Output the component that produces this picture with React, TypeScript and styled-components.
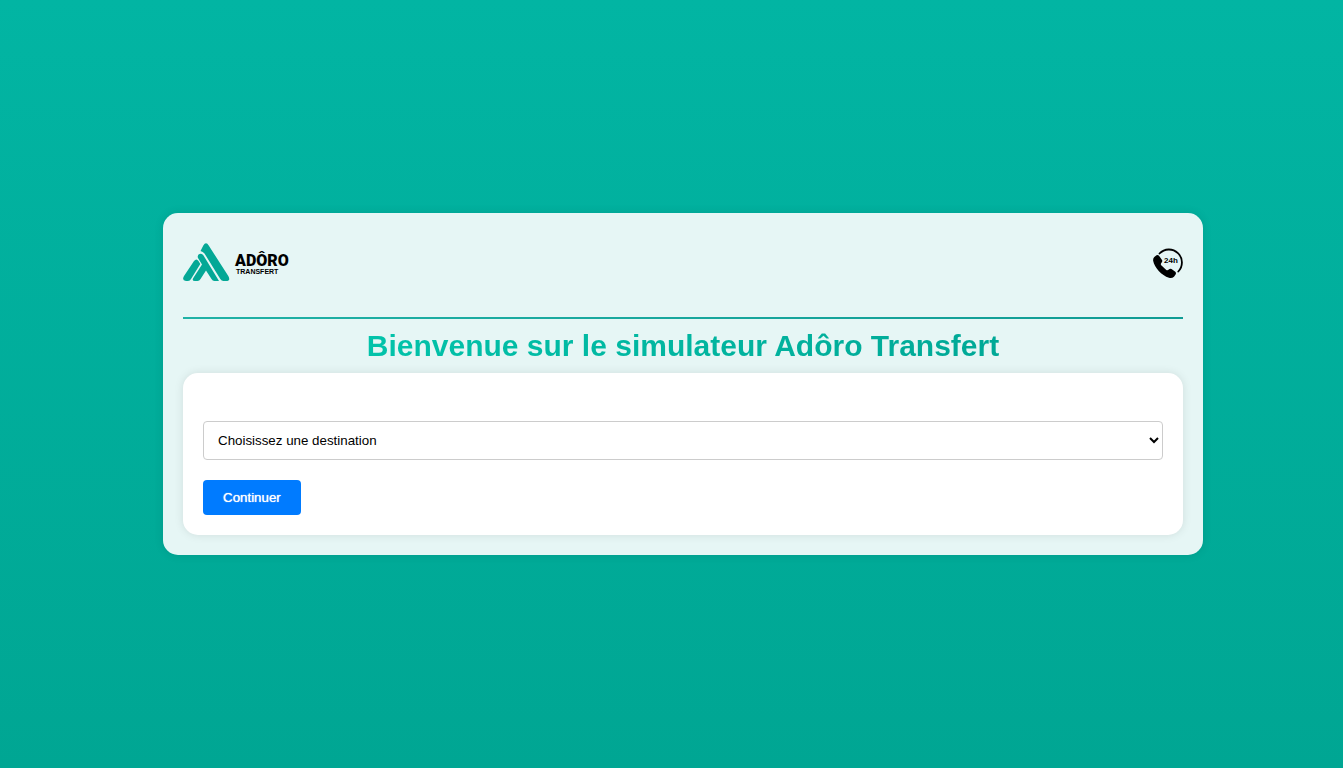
import React from "react";
import styled, { createGlobalStyle } from "styled-components";

const GlobalStyle = createGlobalStyle`
  *, *::before, *::after { box-sizing: border-box; }
  body {
    margin: 0;
    font-family: "Liberation Sans", Arial, sans-serif;
    background: #00a896;
  }
`;

const Page = styled.div`
  min-height: 100vh;
  display: flex;
  align-items: center;
  justify-content: center;
  padding: 20px 0 20px 23px;
  background: linear-gradient(to bottom, #02b5a3, #00a693);
`;

const Card = styled.main`
  width: 100%;
  max-width: 1040px;
  padding: 20px;
  border-radius: 15px;
  background: #e6f6f5;
  box-shadow: 0 0 10px rgba(0, 0, 0, 0.1);
`;

const Header = styled.header`
  display: flex;
  align-items: flex-start;
  justify-content: space-between;
  padding: 10px 0 36px;
  border-bottom: 2px solid;
  border-image: linear-gradient(to right, #20b2a6, #109c94) 1;
`;

const LogoLink = styled.a`
  display: flex;
  svg { display: block; }
`;

const PhoneLink = styled.a`
  display: flex;
  padding-top: 5px;
  svg { display: block; }
`;

const Title = styled.h1`
  margin: 10px 0;
  font-size: 30px;
  line-height: 34px;
  text-align: center;
  color: transparent;
  background: linear-gradient(to right, #02c3aa 18%, #00a896 82%);
  background-clip: text;
  -webkit-background-clip: text;
`;

const Form = styled.form`
  display: flex;
  flex-direction: column;
  align-items: flex-start;
  gap: 20px;
  padding: 48px 20px 20px;
  border-radius: 15px;
  background: #fff;
  box-shadow: 0 0 10px rgba(0, 0, 0, 0.1);
`;

const Select = styled.select`
  width: 100%;
  height: 39px;
  padding: 10px;
  border: 1px solid #ccc;
  border-radius: 4px;
  background: #fff;
  color: #000;
  font-family: inherit;
`;

const Button = styled.button`
  padding: 10px 20px;
  border: none;
  border-radius: 4px;
  background: #007bff;
  color: #fff;
  font-family: inherit;
  line-height: 15px;
  text-shadow: 0 0 1px #fff;
  cursor: pointer;
`;

const Logo = () => (
  <svg width="110" height="38" viewBox="0 0 110 38" aria-hidden="true">
    <g fill="#04a896">
      <path d="M3 38 Q-1.500 37.500 1 33 L11 18 Q13.500 15 15.500 18 L17.300 21 L8 36 Q7 38 5 38 Z" />
      <path d="M12 38 Q8.500 38 10.300 35 L19 21.500 L15 15 Q14 12 16.500 11 Q19 10 20.500 12.500 L36 38 L31.500 38 Q29.500 38 28.500 36 L23 27.500 L17.500 36 Q16.500 38 14.500 38 Z" />
      <path d="M17.500 8 L20.300 2.500 Q23 -2 25.700 2.500 L45.300 33 Q48 38 43 38 L40.500 38 Q38.500 38 37.300 36 L21.500 10.500 Q20 8.500 17.500 8 Z" />
    </g>
    <text x="52" y="23" fontFamily="Roboto, 'Liberation Sans', sans-serif" fontWeight="900" fontSize="16">ADÔRO</text>
    <text x="53" y="31" fontFamily="'Liberation Sans', sans-serif" fontWeight="700" fontSize="7">TRANSFERT</text>
  </svg>
);

const PhoneIcon = () => (
  <svg width="30" height="30" viewBox="0 0 30 30" aria-hidden="true">
    <path d="M6.500 5.500 A12.800 12.800 0 1 1 25.300 23.500" fill="none" stroke="#000" strokeWidth="1.800" strokeLinecap="round" />
    <path d="M1.300 9 L3.500 7.300 Q5 6.600 6.200 8 L9 12 Q9.800 13.500 8.500 14.700 Q7.300 16 8.200 17.300 L13.300 22 Q14.600 22.800 15.800 21.500 Q17 20.200 18.500 21 L22.300 23.800 Q23.500 25 22.600 26.500 L21 28.700 Q19 30.500 16 29.800 C8.500 27.500 1.500 19.500 0.200 13 Q-0.200 10.500 1.300 9 Z" />
    <text x="11" y="15" fontFamily="'Liberation Sans', sans-serif" fontWeight="700" fontSize="8">24h</text>
  </svg>
);

export default function App() {
  return (
    <>
      <GlobalStyle />
      <Page>
        <Card>
          <Header>
            <LogoLink href="#" aria-label="Adôro Transfert"><Logo /></LogoLink>
            <PhoneLink href="#" aria-label="24h"><PhoneIcon /></PhoneLink>
          </Header>
          <Title>Bienvenue sur le simulateur Adôro Transfert</Title>
          <Form onSubmit={(e) => e.preventDefault()}>
            <Select aria-label="Destination" defaultValue="">
              <option value="">Choisissez une destination</option>
            </Select>
            <Button type="submit">Continuer</Button>
          </Form>
        </Card>
      </Page>
    </>
  );
}
